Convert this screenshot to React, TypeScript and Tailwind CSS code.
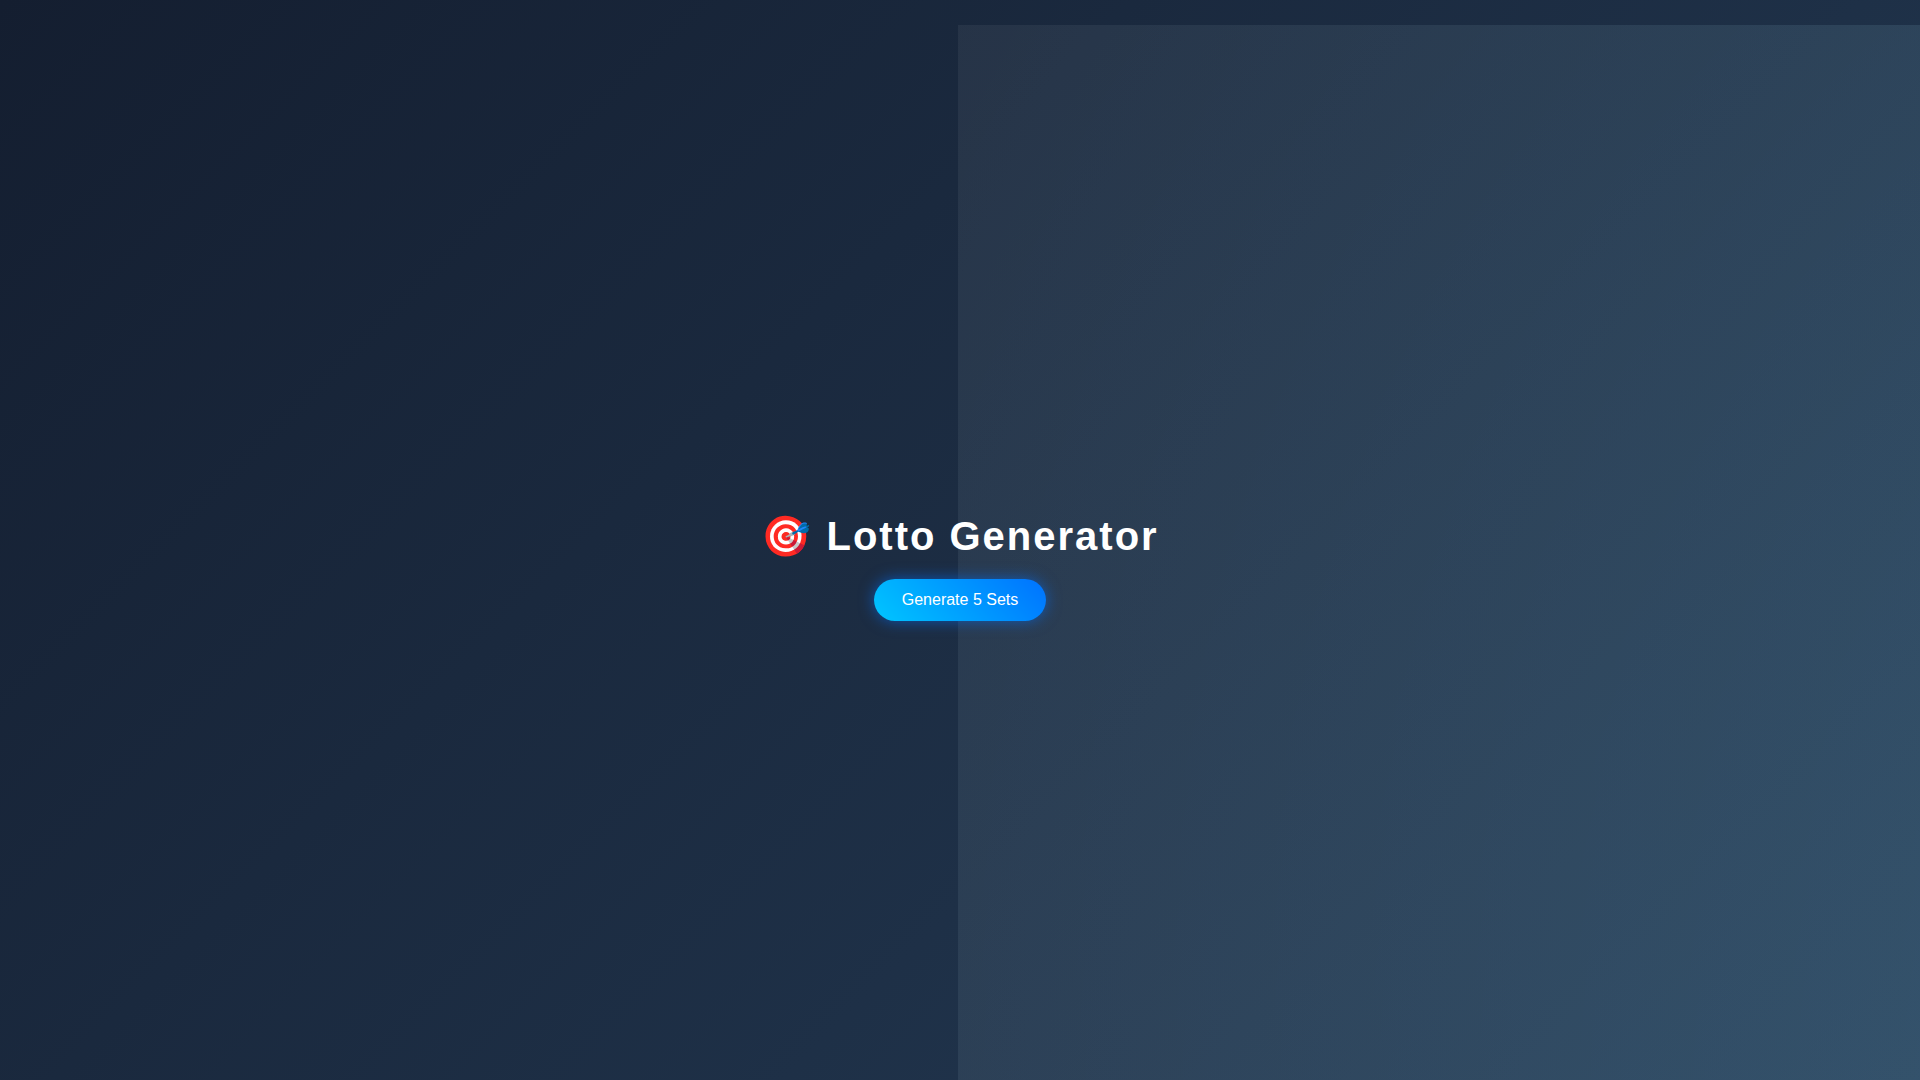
export default function App() {
  return (
    <main className="relative flex min-h-screen flex-col items-center justify-center overflow-hidden bg-[linear-gradient(135deg,#141e30,#243b55)] pt-[54px] font-['Liberation_Sans',Arial,sans-serif] text-white">
      <div
        aria-hidden="true"
        className="pointer-events-none absolute top-[25px] left-[calc(50%-2px)] h-[200%] w-[200%] bg-[radial-gradient(circle,rgba(155,232,255,0.135)_43%,rgba(255,255,255,0.055)_100%)]"
      />
      <h1 className="relative mb-5 text-[40px] leading-[46px] font-bold tracking-[2px]">🎯 Lotto Generator</h1>
      <button
        type="button"
        className="relative cursor-pointer rounded-full bg-[linear-gradient(45deg,#00c6ff,#0072ff)] px-7 py-3 text-base leading-[18px] text-white shadow-[0_0_15px_rgba(0,114,255,0.6)]"
      >
        Generate 5 Sets
      </button>
    </main>
  );
}
